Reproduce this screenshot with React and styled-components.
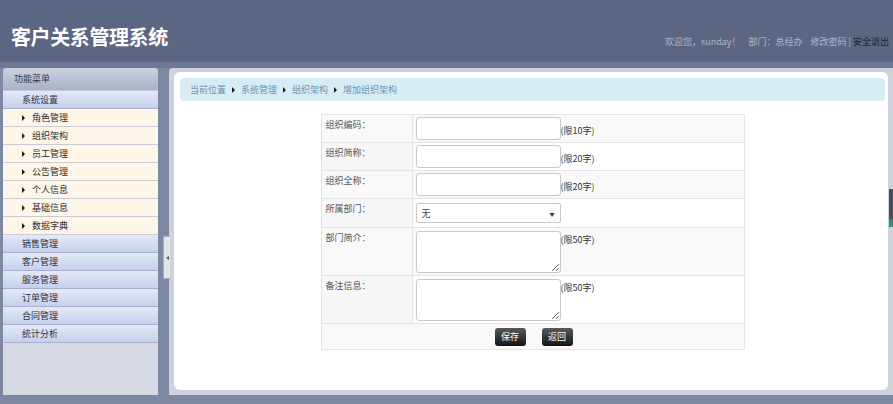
import React from "react";
import styled, { createGlobalStyle } from "styled-components";

const GlobalStyle = createGlobalStyle`
  html, body {
    margin: 0;
    padding: 0;
    background: #7d88a3;
    font-family: "Noto Sans CJK SC", "Noto Sans", "Liberation Sans", sans-serif;
  }
`;

const subMenu = ["角色管理", "组织架构", "员工管理", "公告管理", "个人信息", "基础信息", "数据字典"];
const mainMenu = ["销售管理", "客户管理", "服务管理", "订单管理", "合同管理", "统计分析"];

const fields = [
  { label: "组织编码：", kind: "input", hint: "(限10字)" },
  { label: "组织简称：", kind: "input", hint: "(限20字)" },
  { label: "组织全称：", kind: "input", hint: "(限20字)" },
  { label: "所属部门：", kind: "select" },
  { label: "部门简介：", kind: "area", hint: "(限50字)" },
  { label: "备注信息：", kind: "area", hint: "(限50字)" },
];

const App = () => {
  return (
    <>
      <GlobalStyle />
      <StPage>
        <StHeader>
          <StTitle>客户关系管理系统</StTitle>
          <StUserBar>
            <span>欢迎您，sunday！</span>
            <span>部门：总经办</span>
            <span>修改密码 | <StLogout>安全退出</StLogout></span>
          </StUserBar>
        </StHeader>

        <StMain>
          <StSidebar>
            <StMenuTitle>功能菜单</StMenuTitle>
            <StGroup>系统设置</StGroup>
            {subMenu.map((item) => (
              <StSubItem key={item}>
                <StArrow />
                {item}
              </StSubItem>
            ))}
            {mainMenu.map((item) => (
              <StGroup key={item}>{item}</StGroup>
            ))}
          </StSidebar>

          <StSplitter>
            <StToggle>
              <StToggleArrow />
            </StToggle>
          </StSplitter>

          <StContent>
            <StPanel>
              <StCrumbs>
                <span>当前位置</span>
                <StArrow />
                <span>系统管理</span>
                <StArrow />
                <span>组织架构</span>
                <StArrow />
                <span>增加组织架构</span>
              </StCrumbs>

              <StTable>
                <tbody>
                  {fields.map((f) => (
                    <StRow key={f.label}>
                      <StLabelCell>{f.label}</StLabelCell>
                      <StFieldCell>
                        <StField $top={f.kind === "area"}>
                          {f.kind === "input" && <StInput type="text" />}
                          {f.kind === "select" && (
                            <StSelect>
                              <span>无</span>
                              <StCaret>▼</StCaret>
                            </StSelect>
                          )}
                          {f.kind === "area" && <StTextArea />}
                          {f.hint && <StHint>{f.hint}</StHint>}
                        </StField>
                      </StFieldCell>
                    </StRow>
                  ))}
                  <StRow>
                    <StButtonCell colSpan={2}>
                      <StButtonGroup>
                        <StButton>保存</StButton>
                        <StButton>返回</StButton>
                      </StButtonGroup>
                    </StButtonCell>
                  </StRow>
                </tbody>
              </StTable>
            </StPanel>
          </StContent>
        </StMain>

        <StSideTab />
      </StPage>
    </>
  );
};

export default App;

const StPage = styled.div`
  position: relative;
  width: 893px;
  height: 404px;
  display: flex;
  flex-direction: column;
  overflow: hidden;
`;

const StHeader = styled.div`
  height: 49px;
  padding: 0 4px 13px 11px;
  display: flex;
  align-items: flex-end;
  justify-content: space-between;
  background: #5b6683;
  border-bottom: 6px solid #6d7895;
`;

const StTitle = styled.div`
  color: #ffffff;
  font-size: 20px;
  font-weight: bold;
  line-height: 24px;
  letter-spacing: -0.4px;
`;

const StUserBar = styled.div`
  display: flex;
  gap: 8px;
  color: #aeb6cc;
  font-size: 9px;
  line-height: 12px;
  padding-bottom: 1px;
`;

const StLogout = styled.span`
  color: #1d2433;
`;

const StMain = styled.div`
  flex: 1;
  display: flex;
  padding: 0 0 9px 3px;
  min-height: 0;
`;

const StSidebar = styled.div`
  width: 155px;
  display: flex;
  flex-direction: column;
  background: #d4d9e2;
  border-radius: 4px 4px 0 0;
  overflow: hidden;
`;

const StMenuTitle = styled.div`
  height: 22px;
  line-height: 22px;
  padding-left: 11px;
  font-size: 9px;
  color: #333a48;
  background: linear-gradient(#cdd2e0, #a9b1c7);
  border-bottom: 1px solid #c4cbdc;
`;

const StGroup = styled.div`
  height: 17px;
  line-height: 17px;
  padding-left: 19px;
  font-size: 9px;
  color: #2d3240;
  background: linear-gradient(#e4e9f7, #c6d0ec);
  border-bottom: 1px solid #a5b0cd;
  flex-shrink: 0;
`;

const StSubItem = styled.div`
  height: 17px;
  line-height: 17px;
  padding-left: 19px;
  display: flex;
  align-items: center;
  gap: 7px;
  font-size: 9px;
  color: #2d2d2d;
  background: #fff6ea;
  border-bottom: 1px solid #c9ccd3;
  flex-shrink: 0;
`;

const StArrow = styled.span`
  display: inline-block;
  width: 0;
  height: 0;
  border-top: 3px solid transparent;
  border-bottom: 3px solid transparent;
  border-left: 3px solid #1a1a1a;
`;

const StSplitter = styled.div`
  width: 11px;
  padding-top: 168px;
  position: relative;
  z-index: 1;
`;

const StToggle = styled.div`
  width: 6px;
  height: 41px;
  margin-left: 5px;
  display: flex;
  align-items: center;
  justify-content: center;
  background: #e2e5eb;
  border: 1px solid #a9b0be;
  border-right: none;
  border-radius: 2px 0 0 2px;
`;

const StToggleArrow = styled.span`
  width: 0;
  height: 0;
  border-top: 2px solid transparent;
  border-bottom: 2px solid transparent;
  border-right: 3px solid #555b66;
`;

const StContent = styled.div`
  flex: 1;
  padding: 4px 5px 5px 5px;
  background: #cdd3de;
  border-radius: 4px 0 0 0;
  display: flex;
`;

const StPanel = styled.div`
  flex: 1;
  background: #ffffff;
  border-radius: 6px;
  padding: 6px 3px 0 6px;
  display: flex;
  flex-direction: column;
  align-items: center;
`;

const StCrumbs = styled.div`
  align-self: stretch;
  height: 23px;
  display: flex;
  align-items: center;
  gap: 6px;
  padding-left: 10px;
  background: #d8ecf4;
  border-radius: 4px;
  font-size: 9px;
  color: #6d93b0;
`;

const StTable = styled.table`
  margin-top: 13px;
  width: 424px;
  border-collapse: collapse;
  font-size: 9px;
  color: #555;
`;

const StRow = styled.tr`
  &:nth-child(odd) td {
    background: #f9f9f9;
  }
`;

const StLabelCell = styled.td`
  width: 82px;
  padding: 4px 4px;
  vertical-align: top;
  border: 1px solid #e4e4e4;
  background: #f7f7f7;
  line-height: 12px;
`;

const StFieldCell = styled.td`
  padding: 2px 3px;
  border: 1px solid #e4e4e4;
  background: #fff;
`;

const StField = styled.div`
  display: flex;
  align-items: ${(p) => (p.$top ? "flex-start" : "center")};
`;

const StInput = styled.input`
  box-sizing: border-box;
  width: 145px;
  height: 23px;
  margin: 0;
  border: 1px solid #c9c9c9;
  border-radius: 3px;
  background: #fff;
  outline: none;
`;

const StSelect = styled.div`
  box-sizing: border-box;
  width: 145px;
  height: 20px;
  margin: 2px 0;
  padding: 0 5px;
  display: flex;
  align-items: center;
  justify-content: space-between;
  border: 1px solid #c9c9c9;
  border-radius: 2px;
  background: #fff;
  color: #444;
  font-size: 9px;
`;

const StCaret = styled.span`
  font-size: 5px;
  color: #333;
`;

const StTextArea = styled.textarea`
  box-sizing: border-box;
  width: 145px;
  height: 42px;
  margin: 1px 0 0;
  border: 1px solid #c9c9c9;
  border-radius: 3px;
  background: #fff;
  resize: both;
  display: block;
`;

const StHint = styled.span`
  color: #333;
  font-size: 9px;
  padding-top: 3px;
`;

const StButtonCell = styled.td`
  height: 25px;
  padding: 0;
  border: 1px solid #e4e4e4;
`;

const StButtonGroup = styled.div`
  display: flex;
  justify-content: center;
  gap: 16px;
  padding-left: 2px;
`;

const StButton = styled.div`
  width: 31px;
  height: 18px;
  line-height: 18px;
  text-align: center;
  color: #fff;
  font-size: 9px;
  border-radius: 3px;
  background: linear-gradient(#5a5a5a, #141414);
  cursor: pointer;
`;

const StSideTab = styled.div`
  position: absolute;
  right: 0;
  top: 189px;
  width: 4px;
  height: 38px;
  background: linear-gradient(#4a4f5d 80%, #3c8a6e 80%);
`;
